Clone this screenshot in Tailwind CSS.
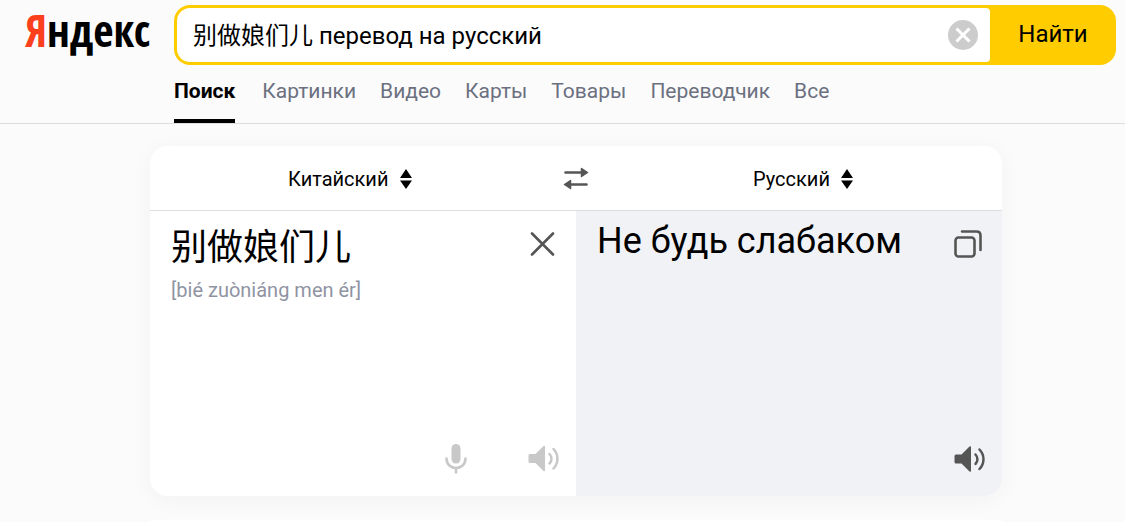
<!DOCTYPE html>
<html lang="ru">
<head>
<meta charset="utf-8">
<meta name="viewport" content="width=device-width, initial-scale=1">
<title>别做娘们儿 перевод на русский — Яндекс</title>
<script src="https://cdn.jsdelivr.net/npm/@tailwindcss/browser@4"></script>
</head>
<body class="min-h-screen overflow-x-hidden bg-[#fbfbfb] font-[Roboto,'Noto_Sans_CJK_SC',sans-serif] text-black">
<header class="border-b border-[#dcdde0] pt-[5px]">
  <div class="flex items-center pr-[9px]">
    <a href="#" aria-label="Яндекс" class="w-[174px] shrink-0 pb-[10px] pl-[25px] font-['Noto_Sans_Condensed','Open_Sans_Condensed','Roboto_Condensed',Roboto,sans-serif] text-[44px] leading-[50px] font-bold whitespace-nowrap"><span class="text-[#fc3f1d]">Я</span>ндекс</a>
    <form class="flex h-[60px] min-w-0 flex-1 rounded-[16px] bg-[#ffcc00] p-[3px] pr-0" onsubmit="return false">
      <div class="flex min-w-0 flex-1 items-center rounded-l-[13px] rounded-r-[4px] bg-white pr-3 pl-4">
        <input type="text" aria-label="Запрос" value="别做娘们儿 перевод на русский" class="h-full min-w-0 flex-1 bg-transparent pb-[3px] text-[24px] outline-none">
        <button type="reset" aria-label="Очистить">
          <svg class="block size-[30px]" viewBox="0 0 30 30"><circle cx="15" cy="15" r="15" fill="#ccc"/><path d="M8.500 8.500l13 13M21.500 8.500l-13 13" stroke="#fff" stroke-width="3" fill="none"/></svg>
        </button>
      </div>
      <button type="submit" class="w-[126px] pb-[2px] text-[24px]">Найти</button>
    </form>
  </div>
  <nav class="flex gap-6 pl-[174px] text-[21px] leading-[28px] whitespace-nowrap text-[#6b7080]">
    <a href="#" aria-current="page" class="mr-[3px] border-b-4 border-black pt-3 pb-[14px] font-bold text-black">Поиск</a>
    <a href="#" class="pt-3">Картинки</a>
    <a href="#" class="pt-3">Видео</a>
    <a href="#" class="pt-3">Карты</a>
    <a href="#" class="pt-3">Товары</a>
    <a href="#" class="pt-3">Переводчик</a>
    <a href="#" class="pt-3">Все</a>
  </nav>
</header>
<main class="mr-[123px] ml-[150px] pt-[22px]">
  <section class="overflow-hidden rounded-[18px] bg-white shadow-[0_4px_24px_rgba(0,0,0,0.04)]">
    <div class="grid h-[65px] grid-cols-[1fr_28px_1fr] items-center border-b border-[#dcdde0] text-[20px]">
      <label class="flex items-center justify-center gap-[11px] pt-px pr-3">
        <select aria-label="Язык оригинала" class="appearance-none bg-transparent outline-none"><option>Китайский</option></select>
        <svg class="h-[20px] w-[12px]" viewBox="0 0 12 20"><path d="M6 0l6 9H0zM6 20l6-8.500H0z"/></svg>
      </label>
      <button type="button" aria-label="Поменять языки">
        <svg class="mx-auto block h-[24px] w-[26px]" viewBox="0 0 26 24" fill="none" stroke="#555" stroke-width="2.600" stroke-linecap="round"><path d="M2.500 6.500h17M6.500 18.500h17"/><path d="M18.500 2.500l6 4-6 4zM7.500 14.500l-6 4 6 4z" fill="#555" stroke-width="1.500" stroke-linejoin="round"/></svg>
      </button>
      <label class="flex items-center justify-center gap-[11px] pt-px pl-[14px]">
        <select aria-label="Язык перевода" class="appearance-none bg-transparent outline-none"><option>Русский</option></select>
        <svg class="h-[20px] w-[12px]" viewBox="0 0 12 20"><path d="M6 0l6 9H0zM6 20l6-8.500H0z"/></svg>
      </label>
    </div>
    <div class="grid min-h-[285px] grid-cols-2">
      <div class="flex flex-col justify-between">
        <div class="flex items-start justify-between pt-2 pr-[21px] pl-[21px]">
          <div>
            <p lang="zh" class="text-[36px] leading-[58px]">别做娘们儿</p>
            <p class="text-[20px] leading-[26px] text-[#8f94a3]">[bié zuòniáng men ér]</p>
          </div>
          <button type="button" aria-label="Удалить текст" class="pt-3">
            <svg class="block size-[26px]" viewBox="0 0 26 26" fill="none" stroke="#555" stroke-width="2.600" stroke-linecap="round"><path d="M3 2.500l21 21M24 2.500l-21 21"/></svg>
          </button>
        </div>
        <div class="flex justify-end gap-[60px] pr-4 pb-[21px]">
          <button type="button" aria-label="Голосовой ввод">
            <svg class="block h-[32px] w-[24px]" viewBox="0 0 24 32" fill="none" stroke="#c8c8c8" stroke-width="2.600" stroke-linecap="round"><rect x="7.500" y="1" width="9" height="19.500" rx="4.500" fill="#c8c8c8" stroke="none"/><path d="M2.500 15.500c0 6 4.500 9.500 9.500 9.500s9.500-3.500 9.500-9.500M12 25v4.500"/></svg>
          </button>
          <button type="button" aria-label="Прослушать оригинал">
            <svg class="block size-[32px]" viewBox="0 0 32 32" fill="none" stroke="#c8c8c8" stroke-width="2.500" stroke-linecap="round"><path d="M2 11h5.500l8-8q1.500-1 1.500 1v23q0 2-1.500 1l-8-8H2q-1.500 0-1.500-1.500v-6q0-1.500 1.500-1.500z" fill="#c8c8c8" stroke="none"/><path d="M21.500 11c2.600 2.800 2.600 7 0 9.500M25.500 6c5.300 5.500 5.300 14 0 19.500"/></svg>
          </button>
        </div>
      </div>
      <div class="flex flex-col justify-between bg-[#f1f2f6]">
        <div class="flex items-start justify-between pt-1 pr-5 pl-[21px]">
          <p class="text-[36px] leading-[52px]">Не будь слабаком</p>
          <button type="button" aria-label="Копировать перевод" class="pt-[15px]">
            <svg class="block size-[28px]" viewBox="0 0 28 28" fill="none" stroke="#555" stroke-width="2.600" stroke-linecap="round"><rect x="1.500" y="7.500" width="19" height="19" rx="3"/><path d="M8 1.500h14.500q4 0 4 4V20"/></svg>
          </button>
        </div>
        <div class="flex justify-end pr-4 pb-[21px]">
          <button type="button" aria-label="Прослушать перевод">
            <svg class="block size-[32px]" viewBox="0 0 32 32" fill="none" stroke="#555" stroke-width="2.500" stroke-linecap="round"><path d="M2 11.500h5.500l8-8q1.500-1 1.500 1v23q0 2-1.500 1l-8-8H2q-1.500 0-1.500-1.500v-6q0-1.500 1.500-1.500z" fill="#555" stroke="none"/><path d="M21.500 11.500c2.600 2.800 2.600 7 0 9.500M25.500 6.500c5.300 5.500 5.300 14 0 19.500"/></svg>
          </button>
        </div>
      </div>
    </div>
  </section>
  <div class="h-[26px] pt-6"><div class="h-[2px] rounded-t-[18px] bg-white"></div></div>
</main>
</body>
</html>
